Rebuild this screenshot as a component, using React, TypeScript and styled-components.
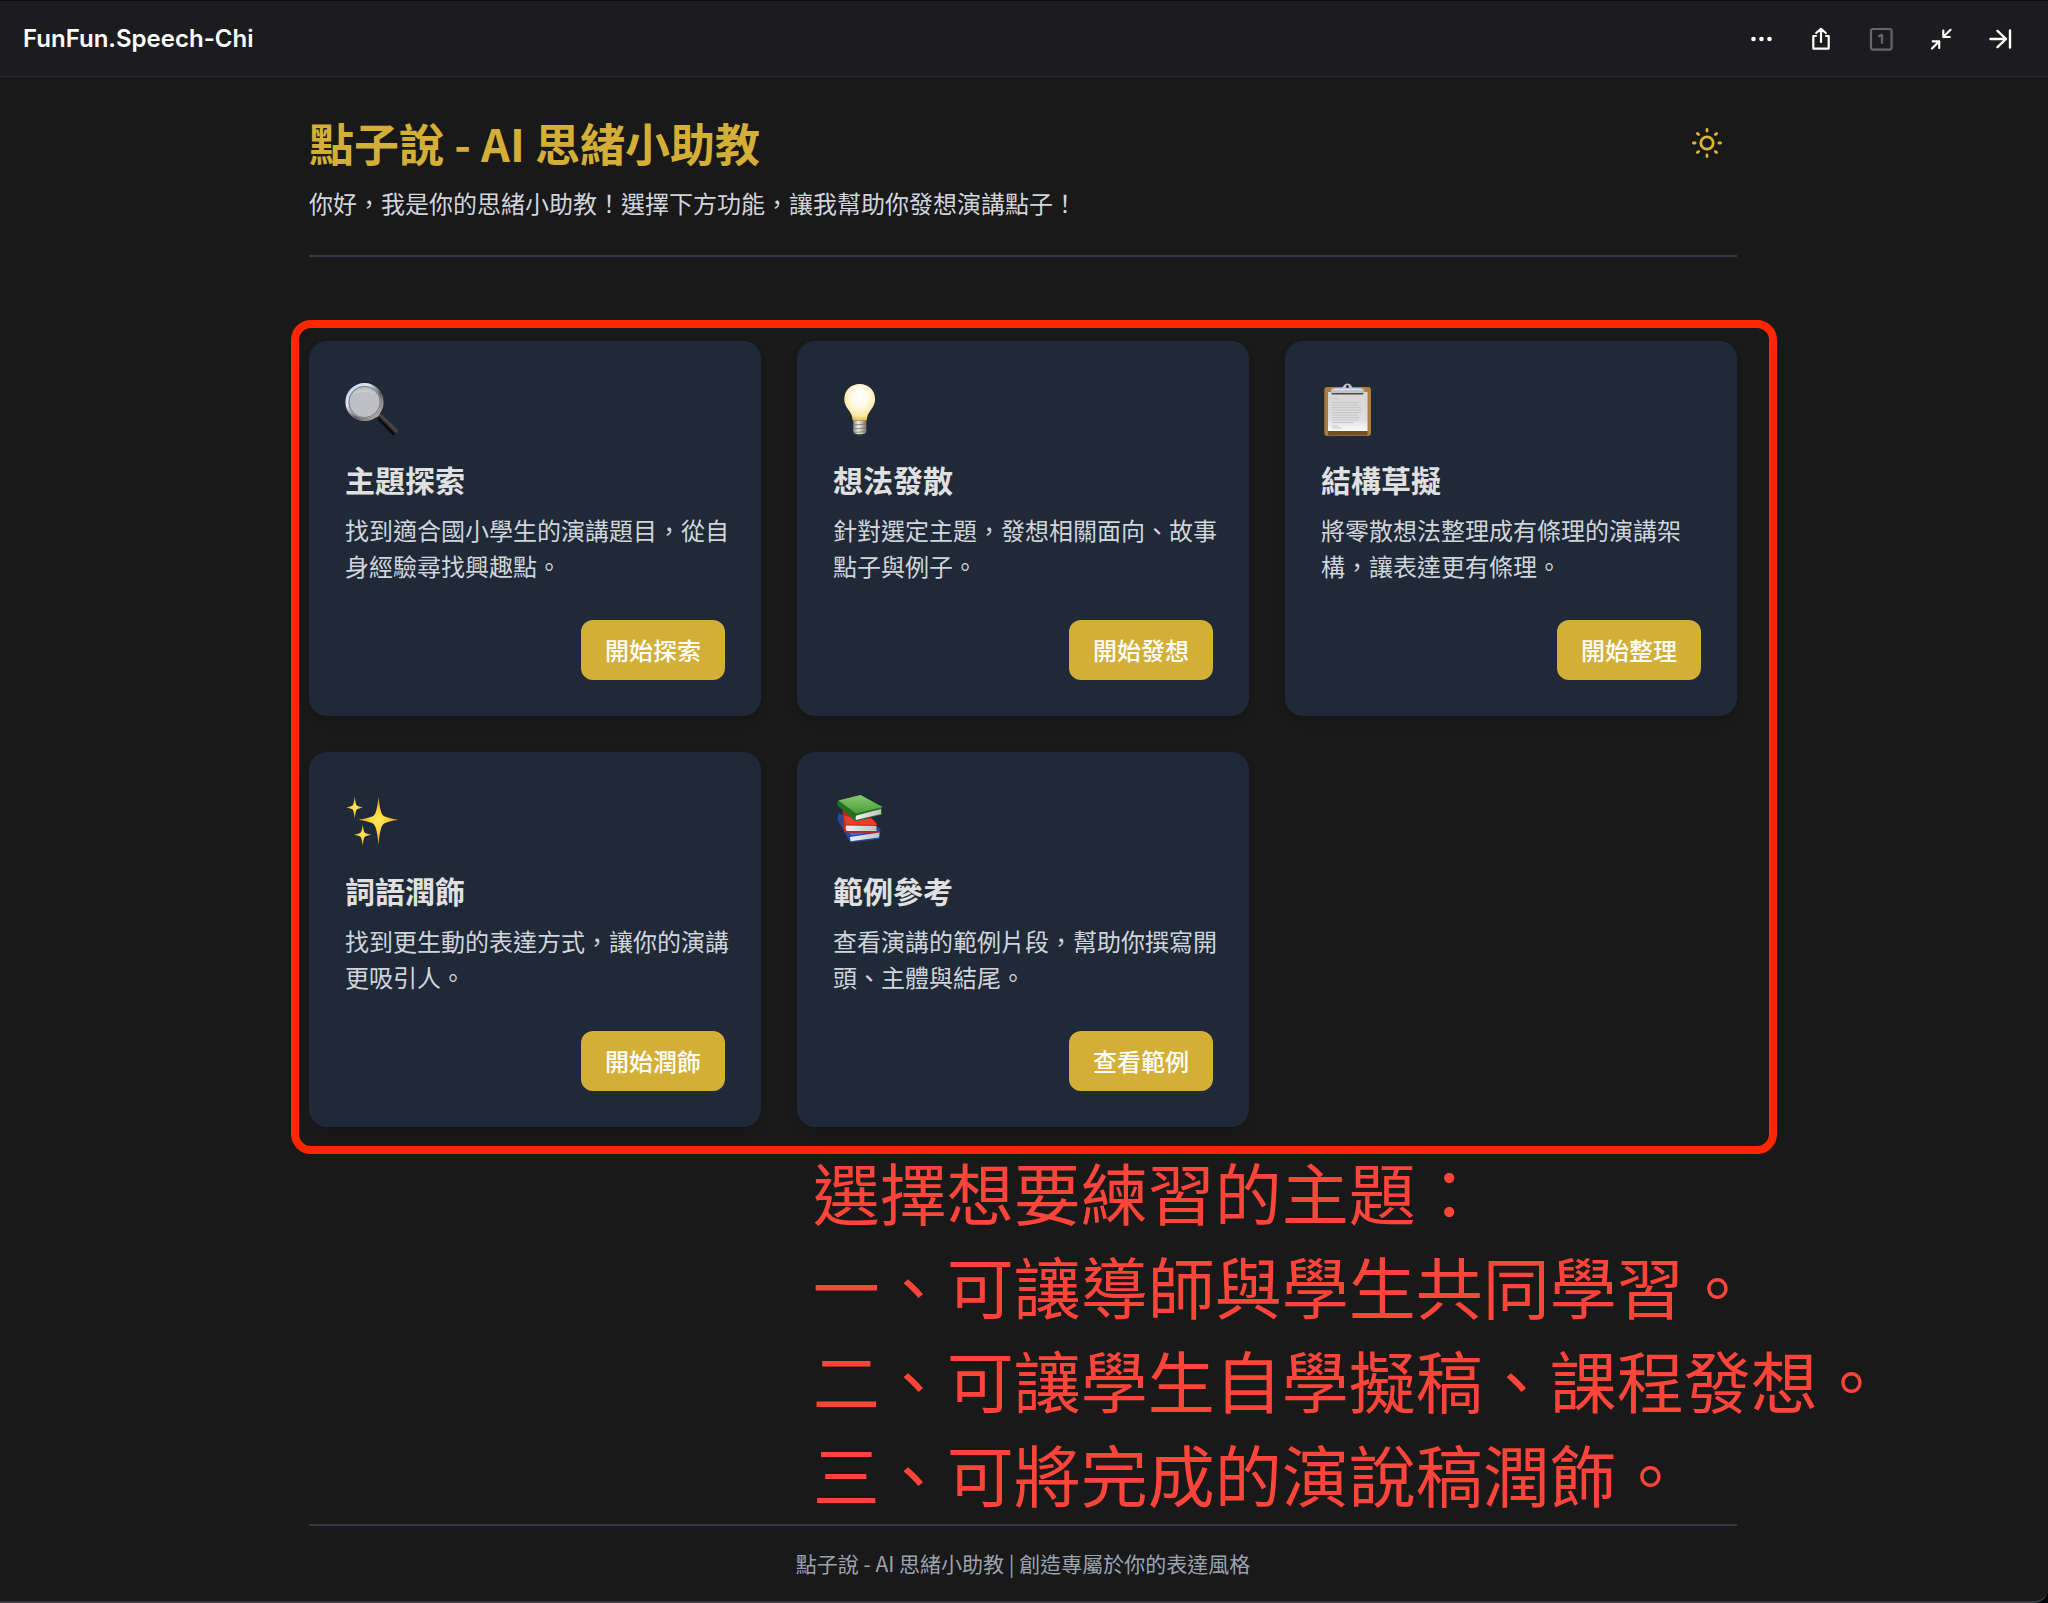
import React from 'react';
import styled, { createGlobalStyle } from 'styled-components';

const GlobalStyle = createGlobalStyle`
  * { box-sizing: border-box; }
  html, body, #root { height: 100%; }
  body {
    margin: 0;
    background: #05050c;
    color: #e0e0e0;
    font-family: "Noto Sans CJK TC", "Noto Sans", sans-serif;
    overflow-x: hidden;
  }
  h1, h2, p { margin: 0; }
  button { font-family: inherit; cursor: pointer; }
`;

const Window = styled.div`
  display: flex;
  flex-direction: column;
  min-height: 100%;
  background: #191919;
  border-top: 1px solid #0e0e10;
  border-bottom: 2px solid #3e3b3e;
  border-bottom-right-radius: 14px;
`;

const TopBar = styled.header`
  display: flex;
  align-items: center;
  justify-content: space-between;
  height: 76px;
  padding: 0 17px 0 23px;
  background: #1c1c1e;
  border-bottom: 1px solid #2a2a30;
`;

const AppName = styled.span`
  color: #fff;
  font-family: Inter, sans-serif;
  font-size: 24px;
  font-weight: 600;
  line-height: 36px;
`;

const Tools = styled.div`
  display: flex;
`;

const ToolButton = styled.button<{ $dim?: boolean }>`
  display: grid;
  place-items: center;
  width: 60px;
  height: 60px;
  padding: 0;
  border: 0;
  background: none;
  color: ${(p) => (p.$dim ? '#66666e' : '#fff')};
`;

const Scroller = styled.div`
  display: flex;
  flex: 1;
  padding-right: 2px;
`;

const Page = styled.div`
  display: flex;
  flex: 1;
  flex-direction: column;
  max-width: 1428px;
  margin: 0 auto;
`;

const Intro = styled.section`
  display: flex;
  align-items: flex-start;
  justify-content: space-between;
  padding: 36px 0 34px;
  border-bottom: 2px solid #323b49;
`;

const Title = styled.h1`
  color: #d4af37;
  font-size: 45px;
  font-weight: 700;
  line-height: 60px;
`;

const Lead = styled.p`
  margin-top: 12px;
  color: #d1d5db;
  font-size: 24px;
  line-height: 36px;
`;

const ThemeButton = styled(ToolButton)`
  color: #e0b52f;
`;

const Features = styled.main`
  position: relative;
  display: grid;
  grid-template-columns: repeat(3, 1fr);
  gap: 36px;
  margin-top: 84px;
`;

const Highlight = styled.div`
  position: absolute;
  inset: -21px -40px -27px -18px;
  border: 8px solid #ff2600;
  border-radius: 20px;
  pointer-events: none;
`;

const Card = styled.article`
  display: flex;
  flex-direction: column;
  padding: 36px;
  border-radius: 18px;
  background: #1f2937;
  box-shadow: 0 6px 9px rgba(0, 0, 0, 0.1);
`;

const CardIcon = styled.div`
  height: 60px;
  padding-top: 5px;
  margin-bottom: 21px;
`;

const CardTitle = styled.h2`
  margin-bottom: 12px;
  font-size: 30px;
  font-weight: 700;
  line-height: 42px;
`;

/* The small negative margin leaves room for sixteen full-width characters. */
const CardText = styled.p`
  margin: 0 -4px 36px 0;
  color: #d1d5db;
  font-size: 24px;
  line-height: 36px;
`;

const CardButton = styled.button`
  align-self: flex-end;
  height: 60px;
  margin-top: auto;
  padding: 0 24px;
  border: 0;
  border-radius: 12px;
  background: #d4af37;
  color: #fff;
  font-size: 24px;
  font-weight: 500;
  line-height: 36px;
`;

const Notes = styled.section`
  margin: 17px 0 0 35%;
  padding: 0 0 4px 4px;
  color: #ff453a;
  font-size: 67px;
  font-weight: 400;
  line-height: 94px;
  white-space: nowrap;
`;

const Footer = styled.footer`
  padding: 22px 0 20px;
  border-top: 2px solid #323b49;
  color: #9ca3af;
  font-size: 21px;
  line-height: 30px;
  text-align: center;
`;

const Dots = () => (
  <svg width="30" height="30" viewBox="0 0 30 30" fill="currentColor" aria-hidden="true">
    <circle cx="7.500" cy="15" r="2.300" /><circle cx="15.500" cy="15" r="2.300" /><circle cx="23.500" cy="15" r="2.300" />
  </svg>
);

const Share = () => (
  <svg width="30" height="30" viewBox="0 0 30 30" fill="none" stroke="currentColor" strokeWidth="2.2" strokeLinecap="round" strokeLinejoin="round" aria-hidden="true">
    <path d="M10 12H7.300v12.600h15.400V12H20M15 18V5.200M10.200 9 15 4.800 19.800 9" />
  </svg>
);

const One = () => (
  <svg width="30" height="30" viewBox="0 0 30 30" fill="none" stroke="currentColor" strokeWidth="2.2" strokeLinecap="round" strokeLinejoin="round" aria-hidden="true">
    <rect x="5" y="5" width="20.600" height="20.600" rx="2" />
    <path d="M13 12.200 16 10.800V19" />
  </svg>
);

const Shrink = () => (
  <svg width="30" height="30" viewBox="0 0 30 30" fill="none" stroke="currentColor" strokeWidth="2.2" strokeLinecap="round" strokeLinejoin="round" aria-hidden="true">
    <path d="M24.500 5.800 17.300 13M17.300 6.500V13h6.500M6 24.500l7.200-7.200M6.700 17.300h6.500v6.700" />
  </svg>
);

const ToEnd = () => (
  <svg width="30" height="30" viewBox="0 0 30 30" fill="none" stroke="currentColor" strokeWidth="2.400" strokeLinecap="round" strokeLinejoin="round" aria-hidden="true">
    <path d="M4.500 15h15.500M11.500 6.900l8.500 8.100-8.500 8.100M24 6.500v17" />
  </svg>
);

const Sun = () => (
  <svg width="36" height="36" viewBox="0 0 36 36" fill="none" stroke="currentColor" strokeWidth="2.800" strokeLinecap="round" aria-hidden="true">
    <circle cx="18" cy="18" r="6.200" />
    <path d="M18 4.400v1.700M18 29.900v1.700M4.400 18h1.700M29.900 18h1.700M8.400 8.400l1.200 1.200M26.400 26.400l1.200 1.200M8.400 27.600l1.200-1.200M26.400 9.600l1.200-1.200" />
  </svg>
);

const Magnifier = () => (
  <svg width="54" height="54" viewBox="0 0 54 54" aria-hidden="true">
    <defs>
      <linearGradient id="rim" x1="0" y1="0" x2="1" y2="1">
        <stop offset="0" stopColor="#a9cdf0" /><stop offset=".3" stopColor="#e4e9ee" />
        <stop offset=".6" stopColor="#5b5d60" /><stop offset="1" stopColor="#d9cdbf" />
      </linearGradient>
      <linearGradient id="grip" x1="36" y1="46" x2="46" y2="36" gradientUnits="userSpaceOnUse">
        <stop offset="0" stopColor="#333" /><stop offset=".35" stopColor="#050505" />
        <stop offset=".6" stopColor="#4c4e50" /><stop offset="1" stopColor="#080808" />
      </linearGradient>
    </defs>
    <path d="m32 32.500 5 5" stroke="#c4b8aa" strokeWidth="4" />
    <path d="M33.500 38.500a3 3 0 0 1 5.500-5l13.500 13c2.500 2.500-3.500 8.500-6 6Z" fill="url(#grip)" />
    <circle cx="19.500" cy="20" r="17.600" fill="#bfc0c5" stroke="url(#rim)" strokeWidth="3" />
    <circle cx="19.500" cy="20" r="15.600" fill="none" stroke="#77797d" strokeWidth="1" />
    <path d="M8 13a15 15 0 0 1 23 0c-7-4-16-4-23 0Z" fill="#cbccd0" />
  </svg>
);

const Bulb = () => (
  <svg width="54" height="54" viewBox="0 0 54 54" aria-hidden="true">
    <defs>
      <radialGradient id="glass" cx=".5" cy=".35" r=".65">
        <stop offset="0" stopColor="#fff" /><stop offset=".4" stopColor="#fffbea" />
        <stop offset=".8" stopColor="#fbe8a6" /><stop offset="1" stopColor="#eebf55" />
      </radialGradient>
      <linearGradient id="cap" x1="0" x2="1">
        <stop offset="0" stopColor="#8d8a83" /><stop offset=".4" stopColor="#efece4" /><stop offset="1" stopColor="#77736b" />
      </linearGradient>
    </defs>
    <path d="M22 51h9l-2.500 3h-4Z" fill="#45464a" />
    <path d="M20.300 38.500h13v10.500c0 2-1.500 3-3 3h-7c-1.500 0-3-1-3-3Z" fill="url(#cap)" />
    <path d="m20.300 43 13-1m-13 5 13-1m-12 4.500 11-1" stroke="#77736c" strokeWidth=".8" />
    <path d="M26.700 2C17.800 2 11.300 8.500 11.300 17c0 5 2.300 8.300 5 12 2.500 3.300 3 6 3.400 9.500h14c.4-3.500 1-6.200 3.400-9.500 2.700-3.700 5-7 5-12C42.100 8.500 35.600 2 26.700 2Z" fill="url(#glass)" />
  </svg>
);

const Clipboard = () => (
  <svg width="54" height="54" viewBox="0 0 54 54" aria-hidden="true">
    <defs>
      <linearGradient id="board" x1="0" x2="1">
        <stop offset="0" stopColor="#a8783b" /><stop offset=".5" stopColor="#c89351" /><stop offset="1" stopColor="#ad7c3d" />
      </linearGradient>
      <linearGradient id="paper" x1="0" y1="0" x2="0" y2="1">
        <stop offset="0" stopColor="#d6d6d6" /><stop offset=".7" stopColor="#dedede" /><stop offset="1" stopColor="#fbfbfb" />
      </linearGradient>
    </defs>
    <rect x="3.300" y="5" width="46.700" height="49" rx="3" fill="url(#board)" />
    <path d="M7 49h39.500v4.500H7Z" fill="#735022" />
    <path d="M7 10h39.500v39H7Z" fill="url(#paper)" />
    <path d="M11 17h6M11 20.500h26M11 23h26M11 25.500h29M11 28h30M11 30.500h29M11 33h26M11 35.500h28M11 38h27M11 40.500h22M11 44h6M11 46h9" stroke="#c6c6c8" strokeWidth="1" />
    <path d="M10 10.500h33l-1 2H11Z" fill="#554636" />
    <path d="M10 11V8.500C10 7 12 6 14.500 6h6c1.800 0 1.800-4.500 6-4.500s4.200 4.500 6 4.500h6C41 6 43 7 43 8.500V11Z" fill="#bdc3cf" />
    <path d="M12 7.500h29" stroke="#dfe3ea" strokeWidth="1" />
    <circle cx="26.500" cy="4.500" r="1.500" fill="#263142" />
  </svg>
);

const Sparkles = () => (
  <svg width="54" height="54" viewBox="0 0 54 54" aria-hidden="true">
    <defs>
      <radialGradient id="star">
        <stop offset="0" stopColor="#ffe566" /><stop offset=".4" stopColor="#fed93a" /><stop offset="1" stopColor="#e08a2c" />
      </radialGradient>
    </defs>
    <g fill="url(#star)">
      <path d="M33.500 4c1.500 14 3 18.500 7 19.800 3 1 6 1.800 12.500 3-6.500 1.200-9.500 2-12.500 3-4 1.300-5.500 6.200-7 22.200-1.500-16-3-20.900-7-22.200-3-1-6.500-1.800-13-3 6.500-1.200 10-2 13-3 4-1.300 5.500-5.800 7-19.800Z" />
      <path d="M9.700 3c.8 7 1.400 9.500 3 10 1.500.5 2.800.8 5.300 1.500-2.500.7-3.800 1-5.300 1.500-1.600.5-2.200 3-3 10-.8-7-1.400-9.500-3-10-1.500-.5-2.800-.8-5.300-1.500 2.500-.7 3.800-1 5.300-1.500 1.600-.5 2.200-3 3-10Z" />
      <path d="M17.700 31c.8 6.500 1.400 8.800 3 9.300 1.500.5 3.300.8 5.800 1.500-2.500.7-4.300 1-5.800 1.500-1.600.5-2.200 3-3 9.700-.8-6.700-1.400-9.200-3-9.700-1.500-.5-3.300-.8-5.800-1.500 2.500-.7 4.300-1 5.800-1.500 1.600-.5 2.200-2.800 3-9.300Z" />
    </g>
  </svg>
);

const Books = () => (
  <svg width="54" height="54" viewBox="0 0 54 54" aria-hidden="true">
    <defs>
      <linearGradient id="green" x1="0" y1="0" x2="0" y2="1">
        <stop offset="0" stopColor="#86c970" /><stop offset="1" stopColor="#4b9e38" />
      </linearGradient>
      <linearGradient id="pages" x1="0" y1="0" x2="1" y2="0">
        <stop offset="0" stopColor="#f1f1f1" /><stop offset="1" stopColor="#bfc0c2" />
      </linearGradient>
    </defs>
    <g transform="translate(0 2)">
      <path d="m5 18 6 2 36 13 .5 3-1 6v2l-29 3.500L4.500 25Z" fill="#2745a2" />
      <path d="m16 38 31-2-28 4.500Z" fill="#4470dd" />
      <path d="m17 42 29.500-4.500-.5 5-28.500 3.800Z" fill="url(#pages)" />
      <path d="m9.500 16 27 5 7.500 7.500-1 3.500 1 6-32.500-.5-1.500-6Z" fill="#c3221b" />
      <path d="m11 21 28 3 5 6-31.500-.5Z" fill="#ed3b2e" />
      <path d="m13 30.500 30.500.500v5H13.500c-1-1.500-1-4-.5-5.500Z" fill="url(#pages)" />
      <path d="M5 5.500 27.500 0 49.500 12l-1 1.300.3 4.700 1 1.500-27.300 7L5.500 11.500C4 10 4 7 5 5.500Z" fill="#23701e" />
      <path d="M5.500 5.500 27.500 0 49.500 12 23 18.500Z" fill="url(#green)" />
      <path d="m23.500 20.500 24.500-6.500v5L23 25c-.7-1.500-.5-3 .5-4.500Z" fill="url(#pages)" />
    </g>
  </svg>
);

const features = [
  { icon: <Magnifier />, title: '主題探索', text: '找到適合國小學生的演講題目，從自身經驗尋找興趣點。', action: '開始探索' },
  { icon: <Bulb />, title: '想法發散', text: '針對選定主題，發想相關面向、故事點子與例子。', action: '開始發想' },
  { icon: <Clipboard />, title: '結構草擬', text: '將零散想法整理成有條理的演講架構，讓表達更有條理。', action: '開始整理' },
  { icon: <Sparkles />, title: '詞語潤飾', text: '找到更生動的表達方式，讓你的演講更吸引人。', action: '開始潤飾' },
  { icon: <Books />, title: '範例參考', text: '查看演講的範例片段，幫助你撰寫開頭、主體與結尾。', action: '查看範例' },
];

const notes = [
  '選擇想要練習的主題：',
  '一、可讓導師與學生共同學習。',
  '二、可讓學生自學擬稿、課程發想。',
  '三、可將完成的演說稿潤飾。',
];

export default function App() {
  return (
    <>
      <GlobalStyle />
      <Window lang="zh-Hant">
        <TopBar>
          <AppName>FunFun.Speech-Chi</AppName>
          <Tools>
            <ToolButton aria-label="更多"><Dots /></ToolButton>
            <ToolButton aria-label="分享"><Share /></ToolButton>
            <ToolButton aria-label="版本" $dim><One /></ToolButton>
            <ToolButton aria-label="縮小"><Shrink /></ToolButton>
            <ToolButton aria-label="收合"><ToEnd /></ToolButton>
          </Tools>
        </TopBar>
        <Scroller>
          <Page>
            <Intro>
              <div>
                <Title>點子說 - AI 思緒小助教</Title>
                <Lead>你好，我是你的思緒小助教！選擇下方功能，讓我幫助你發想演講點子！</Lead>
              </div>
              <ThemeButton aria-label="切換主題"><Sun /></ThemeButton>
            </Intro>
            <Features>
              {features.map((f) => (
                <Card key={f.title}>
                  <CardIcon>{f.icon}</CardIcon>
                  <CardTitle>{f.title}</CardTitle>
                  <CardText>{f.text}</CardText>
                  <CardButton>{f.action}</CardButton>
                </Card>
              ))}
              <Highlight />
            </Features>
            <Notes>
              {notes.map((n) => (
                <p key={n}>{n}</p>
              ))}
            </Notes>
            <Footer>點子說 - AI 思緒小助教 | 創造專屬於你的表達風格</Footer>
          </Page>
        </Scroller>
      </Window>
    </>
  );
}
